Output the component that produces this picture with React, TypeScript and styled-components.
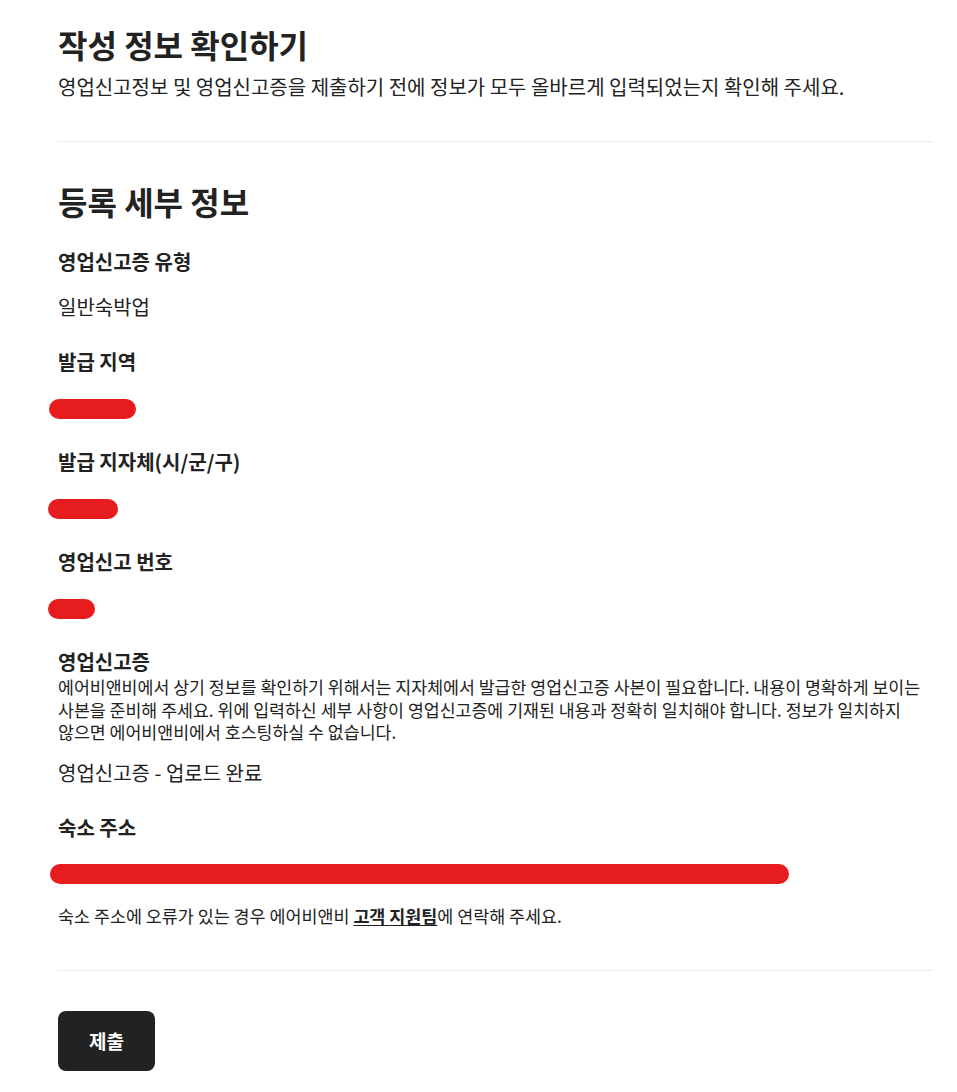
import React from "react";
import styled, { createGlobalStyle } from "styled-components";

const GlobalStyle = createGlobalStyle`
	html, body {
		margin: 0;
		padding: 0;
		background: #fff;
	}
	body {
		font-family: "Noto Sans CJK KR", "Noto Sans", sans-serif;
		color: #222;
		word-break: keep-all;
	}
`;

const Page = styled.main`
	padding: 22px 24px 20px 58px;
`;

const Header = styled.header`
	display: flex;
	flex-direction: column;
	gap: 9px;
	padding-bottom: 42px;
`;

const Title = styled.h1`
	margin: 0;
	font-size: 32px;
	line-height: 44px;
	font-weight: 700;
	color: #222;
`;

const Subtitle = styled.p`
	margin: 0;
	font-size: 20px;
	line-height: 24px;
	color: #222;
`;

const Divider = styled.hr`
	margin: 0;
	border: none;
	border-top: 1px solid #ebebeb;
`;

const Section = styled.section`
	display: flex;
	flex-direction: column;
	padding: 37px 0 43px;
`;

const SectionTitle = styled.h2`
	margin: 0 0 25px;
	font-size: 32px;
	line-height: 44px;
	font-weight: 700;
	color: #222;
`;

const Field = styled.div<{ $gap?: number; $last?: boolean }>`
	display: flex;
	flex-direction: column;
	gap: ${(p) => p.$gap ?? 17}px;
	margin-bottom: ${(p) => (p.$last ? 18 : 27)}px;
`;

const Label = styled.h3`
	margin: 0;
	font-size: 20px;
	line-height: 28px;
	font-weight: 600;
	color: #222;
`;

const Value = styled.div<{ $spaced?: boolean }>`
	display: flex;
	align-items: center;
	height: 28px;
	margin-top: ${(p) => (p.$spaced ? 15 : 0)}px;
	font-size: 20px;
	line-height: 28px;
	color: #222;
`;

const Redacted = styled.span<{ $width: number; $offset?: number }>`
	display: inline-block;
	width: ${(p) => p.$width}px;
	height: 20px;
	margin-top: 3px;
	margin-left: ${(p) => -(p.$offset ?? 10)}px;
	border-radius: 10px;
	background: #e61c1f;
`;

const Help = styled.p`
	margin: 0;
	font-size: 17.3px;
	line-height: 22.5px;
	color: #222;
`;

const Note = styled.p`
	margin: 0;
	font-size: 17.4px;
	line-height: 22px;
	color: #222;

	a {
		color: #222;
		font-weight: 600;
		text-decoration: underline;
		text-underline-offset: 2px;
	}
`;

const Footer = styled.div`
	padding-top: 40px;
`;

const SubmitButton = styled.button`
	width: 97px;
	height: 60px;
	border: none;
	border-radius: 8px;
	background: #222;
	color: #fff;
	font-family: inherit;
	font-size: 19px;
	font-weight: 700;
	cursor: pointer;
`;

export default function App() {
	return (
		<>
			<GlobalStyle />
			<Page>
				<Header>
					<Title>작성 정보 확인하기</Title>
					<Subtitle>
						영업신고정보 및 영업신고증을 제출하기 전에 정보가 모두 올바르게 입력되었는지 확인해 주세요.
					</Subtitle>
				</Header>
				<Divider />
				<Section>
					<SectionTitle>등록 세부 정보</SectionTitle>
					<Field>
						<Label>영업신고증 유형</Label>
						<Value>일반숙박업</Value>
					</Field>
					<Field>
						<Label>발급 지역</Label>
						<Value>
							<Redacted $width={87} $offset={9} />
						</Value>
					</Field>
					<Field>
						<Label>발급 지자체(시/군/구)</Label>
						<Value>
							<Redacted $width={70} />
						</Value>
					</Field>
					<Field>
						<Label>영업신고 번호</Label>
						<Value>
							<Redacted $width={47} />
						</Value>
					</Field>
					<Field $gap={0}>
						<Label>영업신고증</Label>
						<Help>
							에어비앤비에서 상기 정보를 확인하기 위해서는 지자체에서 발급한 영업신고증 사본이 필요합니다. 내용이 명확하게 보이는
							사본을 준비해 주세요. 위에 입력하신 세부 사항이 영업신고증에 기재된 내용과 정확히 일치해야 합니다. 정보가 일치하지
							않으면 에어비앤비에서 호스팅하실 수 없습니다.
						</Help>
						<Value $spaced>영업신고증 - 업로드 완료</Value>
					</Field>
					<Field $last>
						<Label>숙소 주소</Label>
						<Value>
							<Redacted $width={739} $offset={8} />
						</Value>
					</Field>
					<Note>
						숙소 주소에 오류가 있는 경우 에어비앤비 <a href="#">고객 지원팀</a>에 연락해 주세요.
					</Note>
				</Section>
				<Divider />
				<Footer>
					<SubmitButton>제출</SubmitButton>
				</Footer>
			</Page>
		</>
	);
}
